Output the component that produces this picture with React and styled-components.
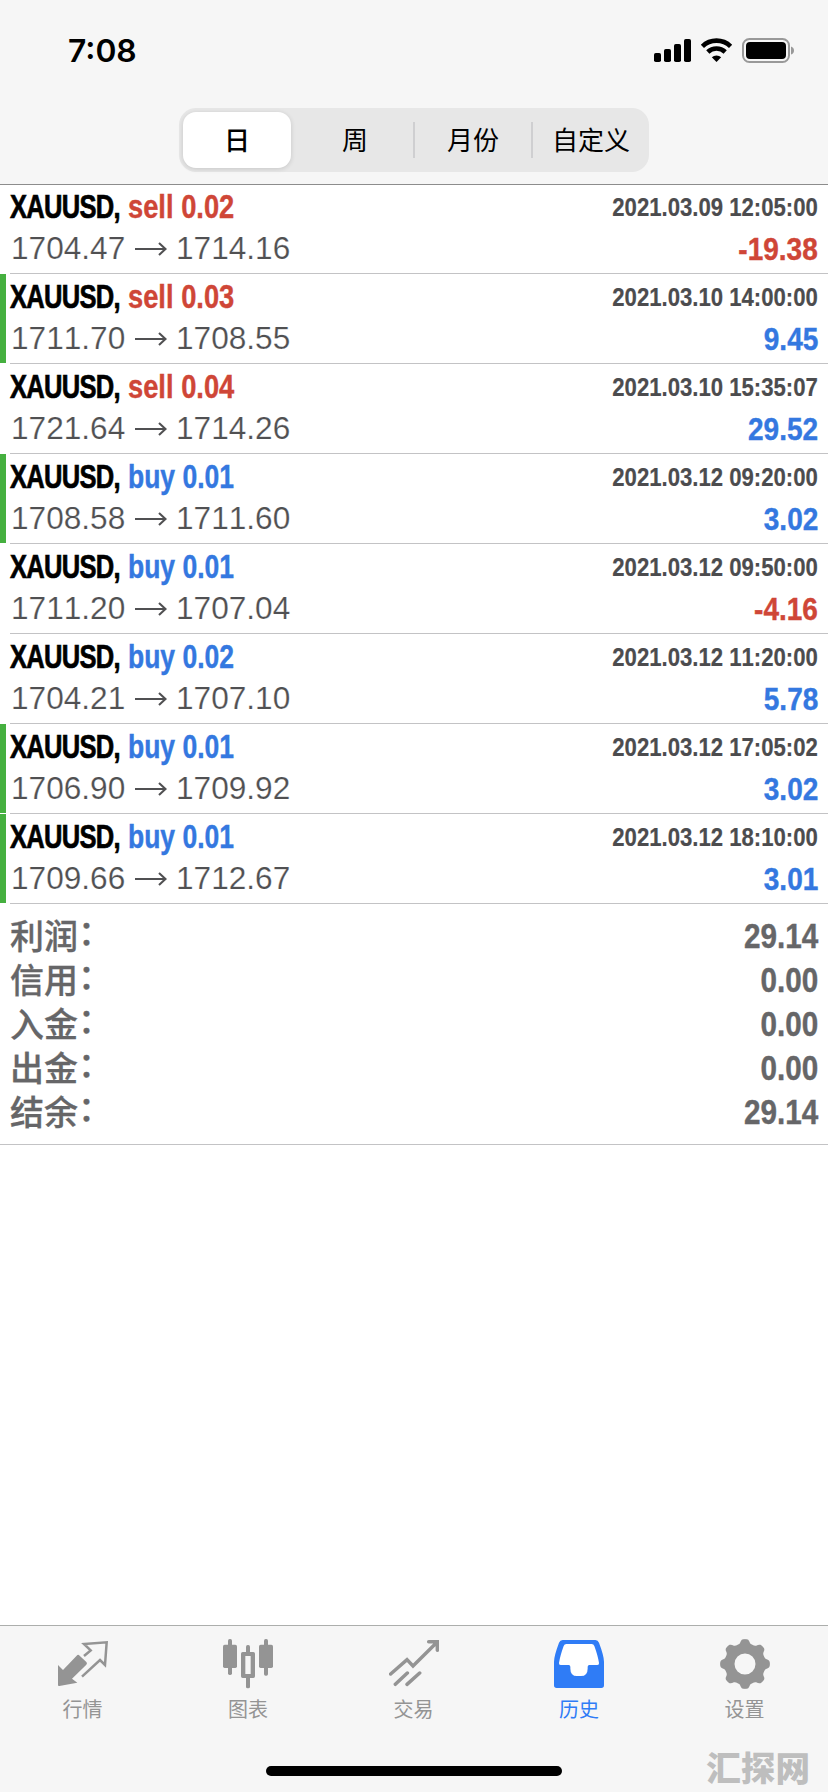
import React from "react";
import styled, { createGlobalStyle } from "styled-components";

const BLUE = "#3478e0";
const RED = "#cf4637";
const CJK = `"Noto Sans CJK SC", sans-serif`;
const SANS = `"Liberation Sans", "Noto Sans CJK SC", sans-serif`;

const GlobalStyle = createGlobalStyle`
  * { box-sizing: border-box; }
  html, body { margin: 0; background: #fff; }
`;

const Screen = styled.div`
  position: relative;
  display: flex;
  flex-direction: column;
  width: 828px;
  height: 1792px;
  overflow: hidden;
  background: #fff;
  font-family: ${SANS};
  font-kerning: none;
`;

const Header = styled.header`
  display: flex;
  flex-direction: column;
  align-items: center;
  height: 185px;
  background: #f6f6f6;
  border-bottom: 1px solid #8c8c8c;
`;

const StatusBar = styled.div`
  display: flex;
  justify-content: space-between;
  align-items: center;
  width: 100%;
  height: 108px;
  padding: 0 33px 8px 68px;
`;

const Clock = styled.span`
  padding-top: 1px;
  font: 600 31.8px/40px Inter, sans-serif;
  font-kerning: normal;
  color: #000;
`;

const Segments = styled.div`
  display: flex;
  width: 470px;
  height: 64px;
  padding: 4px;
  border-radius: 17px;
  background: #e7e7e7;
`;

const Segment = styled.button`
  display: flex;
  align-items: center;
  justify-content: center;
  flex: none;
  width: ${(p) => (p.$active ? 108 : 118)}px;
  margin: 0 ${(p) => (p.$active ? 5 : 0)}px 0 0;
  padding: 0 0 2px;
  border: 0;
  border-radius: 13px;
  background: ${(p) => (p.$active ? "#fff" : "transparent")};
  box-shadow: ${(p) => (p.$active ? "0 1px 5px rgba(0,0,0,.14)" : "none")};
  color: #000;
  font: ${(p) => (p.$active ? 500 : 400)} 26px/36px ${CJK};
`;

const Divider = styled.span`
  flex: none;
  width: 2px;
  height: 36px;
  margin: 10px -1px;
  background: #cfcfd1;
`;

const List = styled.main`
  display: flex;
  flex-direction: column;
`;

const DealRow = styled.article`
  display: flex;
  height: 90px;
  &:first-child { height: 89px; }
`;

const Marker = styled.span`
  width: 6px;
  height: calc(100% - 1px);
  margin-right: 4px;
  background: ${(p) => (p.$on ? "#45b03f" : "transparent")};
`;

const DealBody = styled.div`
  display: flex;
  flex: 1;
  flex-direction: column;
  justify-content: flex-end;
  padding: 0 10px 4px 0;
  border-bottom: 1px solid #c3c3c5;
`;

const Line = styled.div`
  display: flex;
  align-items: center;
  justify-content: space-between;
  height: 41px;
  line-height: 41px;
  white-space: nowrap;
`;

/* Bold sans set in a condensed width, squeezed towards its aligned edge. */
const Condensed = styled.span`
  display: inline-block;
  font-family: ${SANS};
  font-weight: 700;
  white-space: nowrap;
  -webkit-text-stroke: 0.4px currentColor;
  transform: scaleX(${(p) => p.$scale ?? 0.87});
  transform-origin: ${(p) => p.$origin ?? "right"} center;
`;

const Title = styled.span`
  display: flex;
  font-size: 32.5px;
  line-height: 41px;
`;

const SymbolSlot = styled.span`
  width: 118px;
`;

const SymbolName = styled(Condensed)`
  color: #000;
  font-kerning: normal;
  letter-spacing: -0.9px;
  -webkit-text-stroke-width: 0.7px;
`;

const Action = styled(Condensed)`
  color: ${(p) => (p.$side === "buy" ? BLUE : RED)};
`;

const DateText = styled(Condensed)`
  font-size: 25.5px;
  line-height: 41px;
  color: #4c4c4e;
  -webkit-text-stroke-width: 0.2px;
`;

const Prices = styled.span`
  display: flex;
  align-items: center;
  padding-left: 1px;
  font-size: 31.6px;
  color: #505052;
`;

const Price = styled.span`
  width: 114px;
  -webkit-text-stroke: 0.2px #fff;
`;

const ArrowIcon = styled.svg`
  width: 32px;
  height: 16px;
  margin: 0 9px 0 10px;
`;

const Profit = styled(Condensed)`
  padding-top: 2px;
  font-size: 32px;
  line-height: 41px;
  color: ${(p) => (p.$loss ? RED : BLUE)};
`;

const Summary = styled.section`
  padding: 10px;
  border-bottom: 1px solid #c3c3c5;
`;

const SummaryRow = styled.div`
  display: flex;
  align-items: center;
  justify-content: space-between;
  height: 44px;
`;

const SummaryLabel = styled.span`
  display: flex;
  padding-top: 2px;
  font: 500 34px/40px "Liberation Sans", ${CJK};
  color: #666668;
  -webkit-text-stroke: 0.3px currentColor;
`;

const Colon = styled.span`
  margin-top: -4px;
`;

const SummaryValue = styled(Condensed)`
  font-size: 34.5px;
  line-height: 44px;
  color: #666668;
`;

const TabBar = styled.nav`
  display: flex;
  justify-content: center;
  height: 167px;
  margin-top: auto;
  padding: 13px 1px 0 0;
  border-top: 1px solid #acaeac;
  background: #f6f6f6;
`;

const Tab = styled.a`
  display: flex;
  flex-direction: column;
  align-items: center;
  flex: none;
  width: 165.5px;
  gap: 5px;
  color: ${(p) => (p.$active ? "#2f7cf6" : "#949494")};
`;

const TabIcon = styled.svg`
  width: 50px;
  height: 50px;
`;

const TabLabel = styled.span`
  font: 400 20px/30px ${CJK};
`;

const HomeIndicator = styled.div`
  position: absolute;
  left: 266px;
  bottom: 16px;
  width: 296px;
  height: 10px;
  border-radius: 5px;
  background: #000;
`;

const Watermark = styled.div`
  position: absolute;
  right: 18px;
  bottom: 6px;
  font: 900 34.6px/40px ${CJK};
  color: #bebebe;
`;

const gearPath = (() => {
  const pts = [];
  for (let i = 0; i < 240; i++) {
    const a = (i / 240) * Math.PI * 2;
    const r = 22.7 + 2.3 * Math.tanh(1.8 * Math.cos(8 * a));
    pts.push(`${(25 + r * Math.sin(a)).toFixed(2)} ${(25 - r * Math.cos(a)).toFixed(2)}`);
  }
  return `M${pts.join("L")}Z M25 14.5a10.5 10.5 0 1 0 0 21a10.5 10.5 0 1 0 0-21Z`;
})();

const tabs = [
  {
    label: "行情",
    viewBox: "171 87 150 150",
    icon: (
      <>
        <path fill="currentColor" d="M171 165L186 180L227 137Q231 132 236 137L256 156Q260 160 256 164L213 206L229 218L175 228Q171 229 171 225Z" />
        <path fill="none" stroke="currentColor" strokeWidth="7.5" d="M249 138L269 121L249 102L317 97L312 165L297 150L243 200" />
      </>
    ),
  },
  {
    label: "图表",
    viewBox: "669 87 150 150",
    icon: (
      <g fill="currentColor">
        <rect x="669" y="104" width="42" height="70" rx="5" />
        <rect x="684" y="87" width="12" height="108" rx="5" />
        <rect x="777" y="104" width="42" height="70" rx="5" />
        <rect x="792" y="87" width="12" height="110" rx="5" />
        <rect x="738" y="105" width="12" height="26" rx="5" />
        <rect x="738" y="198" width="12" height="37" rx="5" />
        <path fillRule="evenodd" d="M728 126H760Q765 126 765 131V199Q765 204 760 204H728Q723 204 723 199V131Q723 126 728 126ZM736 138V192H752V138Z" />
      </g>
    ),
  },
  {
    label: "交易",
    viewBox: "38 42 150 150",
    icon: (
      <g fill="none" stroke="currentColor" strokeWidth="10.5" strokeLinecap="round">
        <path d="M43 147L92 104L110 123L182 52M157 50H183V76M57 178L93 144M92 178L130 144" />
      </g>
    ),
  },
  {
    label: "历史",
    active: true,
    viewBox: "417 87 150 150",
    icon: (
      <>
        <path fill="#fff" d="M446 98H540L556 168H520L510 200H474L464 168H429Z" />
        <path
          fill="currentColor"
          fillRule="evenodd"
          d="M443 90H541Q549 90 552 98Q567 138 567 155V226Q567 234 559 234H425Q417 234 417 226V155Q417 138 432 98Q435 90 443 90ZM454 102Q448 102 446 108Q435 138 432 159Q431 165 437 165H461Q466 165 466 170V176Q466 198 486 198H498Q518 198 518 176V170Q518 165 523 165H547Q553 165 552 159Q549 138 538 108Q536 102 530 102Z"
        />
      </>
    ),
  },
  {
    label: "设置",
    viewBox: "0 0 50 50",
    icon: <path fill="currentColor" fillRule="evenodd" d={gearPath} />,
  },
];

const deals = [
  ["sell", "0.02", "2021.03.09 12:05:00", "1704.47", "1714.16", "-19.38", false],
  ["sell", "0.03", "2021.03.10 14:00:00", "1711.70", "1708.55", "9.45", true],
  ["sell", "0.04", "2021.03.10 15:35:07", "1721.64", "1714.26", "29.52", false],
  ["buy", "0.01", "2021.03.12 09:20:00", "1708.58", "1711.60", "3.02", true],
  ["buy", "0.01", "2021.03.12 09:50:00", "1711.20", "1707.04", "-4.16", false],
  ["buy", "0.02", "2021.03.12 11:20:00", "1704.21", "1707.10", "5.78", false],
  ["buy", "0.01", "2021.03.12 17:05:02", "1706.90", "1709.92", "3.02", true],
  ["buy", "0.01", "2021.03.12 18:10:00", "1709.66", "1712.67", "3.01", true],
];

const totals = [
  ["利润", "29.14"],
  ["信用", "0.00"],
  ["入金", "0.00"],
  ["出金", "0.00"],
  ["结余", "29.14"],
];

function StatusIcons() {
  return (
    <svg width="142" height="28" viewBox="0 0 142 28">
      <rect x="1" y="17" width="7" height="9" rx="1.8" />
      <rect x="11" y="13" width="7" height="13" rx="1.8" />
      <rect x="21" y="8" width="7" height="18" rx="1.8" />
      <rect x="31" y="3" width="7" height="23" rx="1.8" />
      <g fill="none" stroke="#000" strokeWidth="4.6">
        <path d="M49.4 10.3A20.4 20.4 0 0 1 77.6 10.3" />
        <path d="M54.8 16A12.6 12.6 0 0 1 72.2 16" />
      </g>
      <path d="M63.5 26L58.8 21.3A6.8 6.8 0 0 1 68.2 21.3Z" />
      <rect x="90" y="3" width="46" height="23" rx="6.5" fill="none" stroke="#999" strokeWidth="2" />
      <rect x="93" y="6" width="40" height="17" rx="4" />
      <path d="M138 10.5Q141 11.5 141 14.5T138 18.5Z" fill="#999" />
    </svg>
  );
}

function Deal({ deal }) {
  const [side, volume, date, open, close, profit, marked] = deal;
  return (
    <DealRow>
      <Marker $on={marked} />
      <DealBody>
        <Line>
          <Title>
            <SymbolSlot>
              <SymbolName $scale={0.785} $origin="left">XAUUSD,</SymbolName>
            </SymbolSlot>
            <Action $side={side} $scale={side === "buy" ? 0.815 : 0.84} $origin="left">
              {side} {volume}
            </Action>
          </Title>
          <DateText as="time" $scale={0.868}>{date}</DateText>
        </Line>
        <Line>
          <Prices>
            <Price>{open}</Price>
            <ArrowIcon viewBox="0 0 32 16">
              <path d="M0 8H30M24 2L30.5 8L24 14" fill="none" stroke="#505052" strokeWidth="2.1" />
            </ArrowIcon>
            <Price>{close}</Price>
          </Prices>
          <Profit $scale={0.875} $loss={profit.startsWith("-")}>{profit}</Profit>
        </Line>
      </DealBody>
    </DealRow>
  );
}

export default function App() {
  return (
    <Screen>
      <GlobalStyle />
      <Header>
        <StatusBar>
          <Clock>7:08</Clock>
          <StatusIcons />
        </StatusBar>
        <Segments>
          <Segment $active>日</Segment>
          <Segment>周</Segment>
          <Divider />
          <Segment>月份</Segment>
          <Divider />
          <Segment>自定义</Segment>
        </Segments>
      </Header>
      <List>
        {deals.map((deal) => (
          <Deal key={deal[2]} deal={deal} />
        ))}
      </List>
      <Summary>
        {totals.map(([label, value]) => (
          <SummaryRow key={label}>
            <SummaryLabel>
              {label}
              <Colon>：</Colon>
            </SummaryLabel>
            <SummaryValue $scale={0.86}>{value}</SummaryValue>
          </SummaryRow>
        ))}
      </Summary>
      <TabBar>
        {tabs.map((tab) => (
          <Tab key={tab.label} $active={tab.active}>
            <TabIcon viewBox={tab.viewBox}>{tab.icon}</TabIcon>
            <TabLabel>{tab.label}</TabLabel>
          </Tab>
        ))}
      </TabBar>
      <HomeIndicator />
      <Watermark>汇探网</Watermark>
    </Screen>
  );
}
